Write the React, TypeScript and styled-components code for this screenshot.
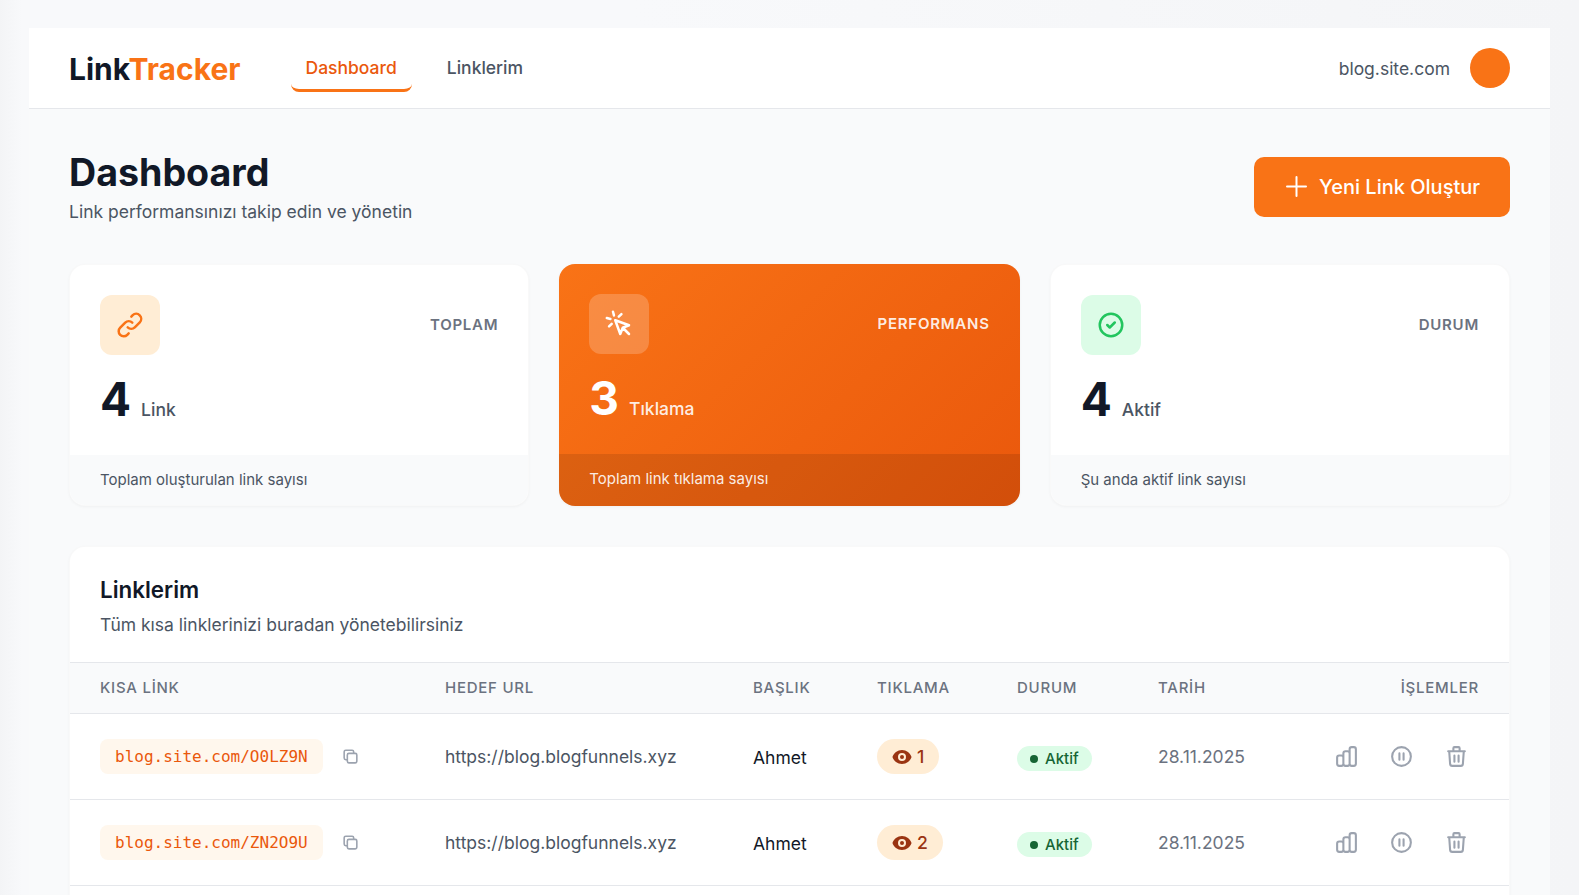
import React from "react";
import styled, { createGlobalStyle } from "styled-components";
import {
  HiOutlineLink, HiOutlineCursorClick, HiOutlineCheckCircle, HiOutlineChartBar,
  HiOutlinePause, HiOutlineTrash, HiOutlineDuplicate, HiEye,
} from "react-icons/hi";

const Global = createGlobalStyle`
  html, body { margin: 0; padding: 0; height: 895px; overflow: hidden; }
  body {
    background: linear-gradient(90deg, #f3f4f6 0, #f8f9fb 22px, #f8f9fb 40%, #f4f5f7 100%);
    font-family: Inter, "Liberation Sans", sans-serif;
    color: #111827;
  }
  * { box-sizing: border-box; }
`;

const Shell = styled.div`
  margin: 28px 29px 0 29px;
  background: #f9fafb;
  min-height: 867px;
`;
const TopBar = styled.header`
  height: 81px;
  background: #fff;
  border-bottom: 1px solid #e5e7eb;
  padding: 0 40px;
  display: flex;
  align-items: center;
`;
const Logo = styled.div`
  padding-top: 2px;
  font-size: 30px;
  font-weight: 700;
  color: #111827;
  span { color: #f97316; }
`;
const Nav = styled.nav`
  display: flex;
  gap: 20px;
  margin-left: 50px;
  align-items: center;
`;
const NavLink = styled.a<{ $active?: boolean }>`
  padding: 11px 15px 9px;
  font-size: 17.5px;
  font-weight: 500;
  line-height: 25px;
  border-bottom: 3px solid ${(p) => (p.$active ? "#f97316" : "transparent")};
  border-radius: 8px;
  color: ${(p) => (p.$active ? "#ea580c" : "#4b5563")};
`;
const Account = styled.div`
  margin-left: auto;
  display: flex;
  align-items: center;
  gap: 20px;
  font-size: 17.5px;
  color: #4b5563;
`;
const Avatar = styled.div`
  width: 40px;
  height: 40px;
  border-radius: 50%;
  background: #f97316;
`;
const Main = styled.main`
  padding: 40px 40px 0;
`;
const TitleRow = styled.div`
  display: flex;
  justify-content: space-between;
  align-items: center;
  margin-bottom: 40px;
`;
const Title = styled.h1`
  margin: 0;
  font-size: 37.6px;
  line-height: 47px;
  font-weight: 700;
  color: #111827;
`;
const Subtitle = styled.p`
  margin: 3px 0 0;
  font-size: 17.5px;
  line-height: 25px;
  color: #4b5563;
`;
const PrimaryButton = styled.button`
  display: flex;
  align-items: center;
  gap: 10px;
  height: 60px;
  padding: 0 30px;
  border: 0;
  border-radius: 10px;
  background: #f97316;
  color: #fff;
  font-family: inherit;
  font-size: 20px;
  font-weight: 500;
`;
const Cards = styled.section`
  display: grid;
  grid-template-columns: repeat(3, 1fr);
  gap: 30px;
  margin-bottom: 40px;
`;
const Card = styled.article<{ $featured?: boolean }>`
  height: 242px;
  border-radius: 16px;
  overflow: hidden;
  display: flex;
  flex-direction: column;
  border: ${(p) => (p.$featured ? "0" : "1px solid rgba(0,0,0,.025)")};
  background: ${(p) => (p.$featured ? "linear-gradient(135deg, #f97316, #ea580c)" : "#fff")};
  color: ${(p) => (p.$featured ? "#fff" : "#111827")};
  box-shadow: 0 1px 3px rgba(0, 0, 0, 0.04);
`;
const CardBody = styled.div`
  flex: 1;
  padding: 30px;
`;
const CardTop = styled.div`
  display: flex;
  justify-content: space-between;
  align-items: center;
  margin-bottom: 20px;
`;
const IconTile = styled.div<{ $bg: string; $fg: string }>`
  width: 60px;
  height: 60px;
  border-radius: 12px;
  display: flex;
  align-items: center;
  justify-content: center;
  background: ${(p) => p.$bg};
  color: ${(p) => p.$fg};
  font-size: 30px;
`;
const CardTag = styled.div<{ $featured?: boolean }>`
  padding-bottom: 2px;
  font-size: 15px;
  font-weight: 600;
  letter-spacing: 0.75px;
  color: ${(p) => (p.$featured ? "rgba(255,255,255,.9)" : "#6b7280")};
`;
const Stat = styled.div`
  display: flex;
  align-items: baseline;
  gap: 10px;
`;
const StatValue = styled.span`
  font-size: 46px;
  line-height: 48px;
  font-weight: 700;
`;
const StatUnit = styled.span<{ $featured?: boolean }>`
  font-size: 17.5px;
  font-weight: 500;
  color: ${(p) => (p.$featured ? "rgba(255,255,255,.9)" : "#4b5563")};
`;
const CardFoot = styled.div<{ $featured?: boolean }>`
  height: ${(p) => (p.$featured ? 52 : 50)}px;
  padding: 0 30px ${(p) => (p.$featured ? 3 : 2)}px;
  display: flex;
  align-items: center;
  font-size: 15px;
  background: ${(p) => (p.$featured ? "rgba(0,0,0,.1)" : "#f9fafb")};
  color: ${(p) => (p.$featured ? "rgba(255,255,255,.9)" : "#4b5563")};
`;
const Panel = styled.section`
  background: #fff;
  border: 1px solid rgba(0,0,0,.025);
  border-radius: 16px 16px 0 0;
  box-shadow: 0 1px 3px rgba(0, 0, 0, 0.04);
  padding-bottom: 30px;
`;
const PanelHead = styled.div`
  padding: 29px 30px 24px;
`;
const PanelTitle = styled.h2`
  margin: 0;
  font-size: 22.4px;
  line-height: 27px;
  font-weight: 600;
`;
const PanelSub = styled.p`
  margin: 8px 0 0;
  font-size: 17.5px;
  line-height: 27px;
  color: #4b5563;
`;
const Table = styled.table`
  width: 100%;
  border-collapse: collapse;
  table-layout: fixed;
`;
const Th = styled.th<{ $w?: number; $right?: boolean }>`
  ${(p) => p.$w && `width: ${p.$w}px;`}
  height: 51px;
  padding: 0 ${(p) => (p.$right ? 30 : 0)}px 2px ${(p) => (p.$right ? 0 : 30)}px;
  text-align: ${(p) => (p.$right ? "right" : "left")};
  font-size: 15px;
  font-weight: 500;
  letter-spacing: 0.75px;
  color: #6b7280;
  background: #f9fafb;
  border-top: 1px solid #e5e7eb;
  border-bottom: 1px solid #e5e7eb;
`;
const Td = styled.td<{ $muted?: boolean }>`
  height: 86px;
  padding: 0 0 0 30px;
  font-size: 17.5px;
  color: ${(p) => (p.$muted ? "#6b7280" : "#4b5563")};
  border-bottom: 1px solid #e5e7eb;
`;
const NameCell = styled(Td)`
  padding-top: 2px;
  color: #111827;
`;
const ShortWrap = styled.div`
  display: flex;
  align-items: center;
  gap: 18px;
`;
const ShortLink = styled.code`
  padding: 5px 15px;
  border-radius: 8px;
  background: #fff7ed;
  color: #ea580c;
  font-family: "DejaVu Sans Mono", monospace;
  font-size: 16px;
  line-height: 25px;
`;
const CopyBtn = styled.span`
  display: flex;
  color: #9ca3af;
  font-size: 19px;
`;
const ClickPill = styled.span`
  display: inline-flex;
  align-items: center;
  gap: 5px;
  height: 35px;
  padding: 0 15px;
  border-radius: 18px;
  background: #ffedd5;
  color: #9a3412;
  font-size: 17.6px;
  font-weight: 500;
`;
const StatusPill = styled.span`
  display: inline-flex;
  align-items: center;
  gap: 7px;
  height: 25px;
  margin-top: 4px;
  padding: 0 13px;
  border-radius: 13px;
  background: #dcfce7;
  color: #166534;
  font-size: 15px;
  font-weight: 500;
  &::before {
    content: "";
    width: 8px;
    height: 8px;
    border-radius: 50%;
    background: #166534;
  }
`;
const Actions = styled.div`
  display: flex;
  justify-content: flex-end;
  gap: 30px;
  padding-right: 40px;
  color: #9ca3af;
  font-size: 25px;
  svg { display: block; }
`;

const PlusIcon = () => (
  <svg width="25" height="25" viewBox="0 0 25 25" fill="none" stroke="currentColor" strokeWidth="2" strokeLinecap="round">
    <path d="M12.5 3v19M3 12.5h19" />
  </svg>
);

const links = [
  { short: "blog.site.com/O0LZ9N", clicks: 1 },
  { short: "blog.site.com/ZN2O9U", clicks: 2 },
];

export default function App() {
  return (
    <>
      <Global />
      <Shell>
        <TopBar>
          <Logo>Link<span>Tracker</span></Logo>
          <Nav>
            <NavLink $active>Dashboard</NavLink>
            <NavLink>Linklerim</NavLink>
          </Nav>
          <Account>
            blog.site.com
            <Avatar />
          </Account>
        </TopBar>
        <Main>
          <TitleRow>
            <div>
              <Title>Dashboard</Title>
              <Subtitle>Link performansınızı takip edin ve yönetin</Subtitle>
            </div>
            <PrimaryButton><PlusIcon />Yeni Link Oluştur</PrimaryButton>
          </TitleRow>
          <Cards>
            <Card>
              <CardBody>
                <CardTop>
                  <IconTile $bg="#ffedd5" $fg="#f97316"><HiOutlineLink /></IconTile>
                  <CardTag>TOPLAM</CardTag>
                </CardTop>
                <Stat><StatValue>4</StatValue><StatUnit>Link</StatUnit></Stat>
              </CardBody>
              <CardFoot>Toplam oluşturulan link sayısı</CardFoot>
            </Card>
            <Card $featured>
              <CardBody>
                <CardTop>
                  <IconTile $bg="rgba(255,255,255,.2)" $fg="#fff"><HiOutlineCursorClick /></IconTile>
                  <CardTag $featured>PERFORMANS</CardTag>
                </CardTop>
                <Stat><StatValue>3</StatValue><StatUnit $featured>Tıklama</StatUnit></Stat>
              </CardBody>
              <CardFoot $featured>Toplam link tıklama sayısı</CardFoot>
            </Card>
            <Card>
              <CardBody>
                <CardTop>
                  <IconTile $bg="#dcfce7" $fg="#22c55e"><HiOutlineCheckCircle /></IconTile>
                  <CardTag>DURUM</CardTag>
                </CardTop>
                <Stat><StatValue>4</StatValue><StatUnit>Aktif</StatUnit></Stat>
              </CardBody>
              <CardFoot>Şu anda aktif link sayısı</CardFoot>
            </Card>
          </Cards>
          <Panel>
            <PanelHead>
              <PanelTitle>Linklerim</PanelTitle>
              <PanelSub>Tüm kısa linklerinizi buradan yönetebilirsiniz</PanelSub>
            </PanelHead>
            <Table>
              <thead>
                <tr>
                  <Th $w={345}>KISA LİNK</Th>
                  <Th $w={308}>HEDEF URL</Th>
                  <Th $w={124}>BAŞLIK</Th>
                  <Th $w={140}>TIKLAMA</Th>
                  <Th $w={141}>DURUM</Th>
                  <Th $w={170}>TARİH</Th>
                  <Th $right>İŞLEMLER</Th>
                </tr>
              </thead>
              <tbody>
                {links.map((l) => (
                  <tr key={l.short}>
                    <Td>
                      <ShortWrap>
                        <ShortLink>{l.short}</ShortLink>
                        <CopyBtn><HiOutlineDuplicate /></CopyBtn>
                      </ShortWrap>
                    </Td>
                    <Td>https://blog.blogfunnels.xyz</Td>
                    <NameCell>Ahmet</NameCell>
                    <Td><ClickPill><HiEye size={20} />{l.clicks}</ClickPill></Td>
                    <Td><StatusPill>Aktif</StatusPill></Td>
                    <Td $muted>28.11.2025</Td>
                    <Td>
                      <Actions>
                        <HiOutlineChartBar />
                        <HiOutlinePause />
                        <HiOutlineTrash />
                      </Actions>
                    </Td>
                  </tr>
                ))}
              </tbody>
            </Table>
          </Panel>
        </Main>
      </Shell>
    </>
  );
}
